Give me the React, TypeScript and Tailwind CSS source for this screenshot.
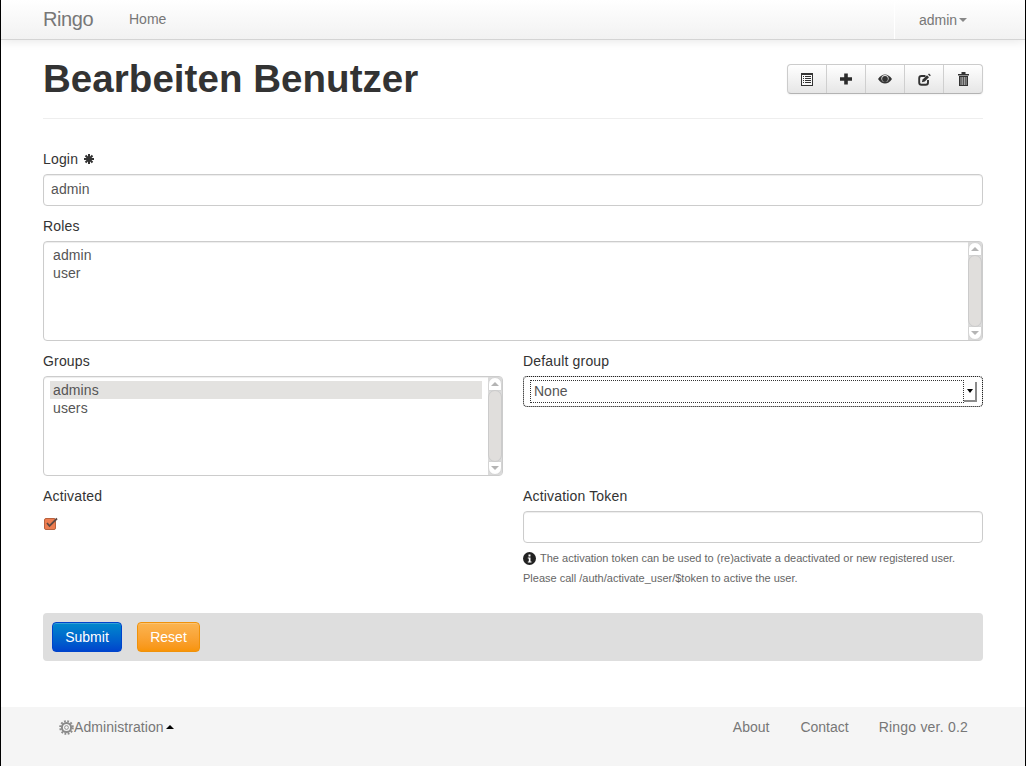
import React from "react";

const Scrollbar = () => (
  <div className="w-[14px] shrink-0 bg-[#dadada] flex flex-col">
    <div className="h-[14px] bg-white rounded-t-[7px] border border-[#d4d4d4] flex items-center justify-center shrink-0">
      <div className="w-0 h-0 border-x-[4px] border-x-transparent border-b-[4px] border-b-[#b4b4b4]" />
    </div>
    <div className="flex-1 bg-[#e0dedc] rounded-[7px] border border-[#cbcbcb] -my-[1px] z-10" />
    <div className="h-[14px] bg-white rounded-b-[7px] border border-[#d4d4d4] flex items-center justify-center shrink-0">
      <div className="w-0 h-0 border-x-[4px] border-x-transparent border-t-[4px] border-t-[#b4b4b4]" />
    </div>
  </div>
);

const ListBox = ({ items, selected }: { items: string[]; selected?: string }) => (
  <div className="h-[100px] border border-[#cccccc] rounded-[4px] flex shadow-[inset_0_1px_1px_rgba(0,0,0,0.075)] bg-white">
    <div className="flex-1 pl-[6px] pr-[6px] pt-[4px] text-[#555555]">
      {items.map((i) => (
        <div key={i} className={`h-[18px] leading-[18px] pl-[3px] tracking-[0.1px] ${i === selected ? "bg-[#e3e2e0]" : ""}`}>
          {i}
        </div>
      ))}
    </div>
    <Scrollbar />
  </div>
);

const ToolButton = ({ children, last }: { children: React.ReactNode; last?: boolean }) => (
  <div
    className={`h-full flex items-center justify-center ${last ? "flex-1" : "w-[39px] shrink-0 border-r border-[#cfcfcf]"}`}
  >
    {children}
  </div>
);

const Label = ({ children }: { children: React.ReactNode }) => (
  <div className="h-[20px] leading-[20px] mb-[5px] text-[#333333] tracking-[0.17px]">{children}</div>
);

export default function App() {
  return (
    <div
      className="min-h-[766px] h-[766px] bg-white border-x border-black flex flex-col text-[14px] text-[#333333] overflow-hidden"
      style={{ fontFamily: '"Liberation Sans", Arial, sans-serif' }}
    >
      {/* Navbar */}
      <nav className="h-[40px] shrink-0 bg-gradient-to-b from-white to-[#f2f2f2] border-b border-[#d4d4d4] shadow-[0_1px_10px_rgba(0,0,0,0.1)] flex pl-[42px] pr-[42px] items-stretch">
        <div className="text-[20px] text-[#777777] leading-[39px] w-[86px] tracking-[-0.4px]">Ringo</div>
        <div className="text-[#777777] leading-[39px]">Home</div>
        <div className="ml-auto w-[89px] border-l border-white pl-[24px] text-[#777777] leading-[38px] flex items-center">
          <span>admin</span>
          <span className="ml-[2px] mt-[1px] w-0 h-0 border-x-[4px] border-x-transparent border-t-[4px] border-t-[#888888]" />
        </div>
      </nav>

      <main className="px-[42px] flex-1">
        {/* Header */}
        <div className="h-[79px] border-b border-[#eeeeee] flex justify-between items-start">
          <h1 className="text-[38.5px] font-bold leading-[40px] text-[#333333] mt-[19px] tracking-[0.05px]">Bearbeiten Benutzer</h1>
          <div className="mt-[24px] w-[196px] h-[30px] flex rounded-[4px] border border-[#cccccc] border-b-[#b3b3b3] bg-gradient-to-b from-white to-[#e6e6e6] shadow-[inset_0_1px_0_rgba(255,255,255,0.2),0_1px_2px_rgba(0,0,0,0.05)]">
            <ToolButton>
              <svg width="12" height="13" viewBox="0 0 12 13">
                <rect x="0.500" y="1" width="11" height="11.500" fill="#f8f8f8" stroke="#333" />
                <path d="M0 1h12" stroke="#333" strokeWidth="2" />
                <path d="M2 3.500h1M2 5.500h1M2 7.500h1M2 9.500h1M4 3.500h6M4 5.500h6M4 7.500h6M4 9.500h6" stroke="#333" strokeWidth="1" />
              </svg>
            </ToolButton>
            <ToolButton>
              <svg width="12" height="12" viewBox="0 0 12 12">
                <path d="M4.200 0.500h3.600V4.200H12v3.600H7.800v3.700H4.200V7.800H0V4.200h4.200z" fill="#2b2b2b" />
              </svg>
            </ToolButton>
            <ToolButton>
              <svg width="14" height="10" viewBox="0 0 14 10">
                <path d="M0 5C2 2 4.500 0.500 7 0.500S12 2 14 5c-2 3-4.500 4.500-7 4.500S2 8 0 5z" fill="#333" />
                <circle cx="7" cy="4.500" r="3.600" fill="#e9e9e9" />
                <circle cx="7" cy="5" r="2.900" fill="#333" />
              </svg>
            </ToolButton>
            <ToolButton>
              <svg width="13" height="13" viewBox="0 0 13 13">
                <path d="M7.500 3H3.500A2.300 2.300 0 0 0 1.200 5.300v4.200a2.300 2.300 0 0 0 2.300 2.300h4.200a2.300 2.300 0 0 0 2.300-2.300V7" fill="none" stroke="#333" strokeWidth="1.900" />
                <path d="M4.600 6.400l-0.700 2.900 2.900-0.700L11 4.200 9 2.300z" fill="#333" />
                <path d="M10 1.400l1.900 1.900 0.900-1-1.800-1.800z" fill="#333" />
              </svg>
            </ToolButton>
            <ToolButton last>
              <svg width="11" height="14" viewBox="0 0 11 14">
                <path d="M0 2h11v1.500H0zM3.500 0h4v2h-4z" fill="#333" />
                <path d="M1 4h9v10H1z" fill="#333" />
                <path d="M3 5v8M4.700 5v8M6.400 5v8M8.100 5v8" stroke="#e6e6e6" strokeWidth="0.700" />
              </svg>
            </ToolButton>
          </div>
        </div>

        {/* Form */}
        <div className="mt-[30px]">
          <Label>
            <span className="flex items-center h-full">
              Login
              <svg className="ml-[6px]" width="10" height="10" viewBox="0 0 10 10">
                <path d="M5 0v10M0 5h10M1.500 1.500l7 7M8.500 1.500l-7 7" stroke="#333" strokeWidth="2" />
              </svg>
            </span>
          </Label>
          <div className="h-[32px] border border-[#cccccc] rounded-[4px] px-[7px] leading-[29px] text-[#555555] tracking-[0.1px] shadow-[inset_0_1px_1px_rgba(0,0,0,0.075)] mb-[10px]">
            admin
          </div>

          <Label>Roles</Label>
          <ListBox items={["admin", "user"]} />

          <div className="grid grid-cols-2 gap-x-[20px] mt-[10px]">
            <div>
              <Label>Groups</Label>
              <ListBox items={["admins", "users"]} selected="admins" />
            </div>
            <div>
              <Label>Default group</Label>
              <div className="h-[31px] rounded-[4px] border border-[#cccccc] outline-1 outline-dotted outline-[#222222] -outline-offset-[1px] flex items-center pl-[6px] pr-[5px]">
                <div className="flex-1 h-[23px] border border-dotted border-[#333333] leading-[21px] pl-[3px] text-[#555555]">
                  None
                </div>
                <div className="w-[13px] h-[20px] border-r-2 border-b-2 border-[#8a8a8a] flex items-center justify-center">
                  <div className="w-0 h-0 border-x-[3px] border-x-transparent border-t-[4px] border-t-black" />
                </div>
              </div>
            </div>
          </div>

          <div className="grid grid-cols-2 gap-x-[20px] mt-[10px]">
            <div>
              <Label>Activated</Label>
              <svg className="ml-[1px] mt-[11px]" width="14" height="14" viewBox="0 0 14 14">
                <rect x="0.500" y="1.500" width="11" height="11" rx="1.500" fill="#ee7d50" stroke="#b8623f" />
                <path d="M3 6l2.500 3L13 1.500" fill="none" stroke="#5f4a44" strokeWidth="1.800" />
              </svg>
            </div>
            <div>
              <Label>Activation Token</Label>
              <div className="h-[32px] border border-[#cccccc] rounded-[4px] shadow-[inset_0_1px_1px_rgba(0,0,0,0.075)]" />
              <div className="mt-[5px] text-[11px] leading-[20px] text-[#666666]">
                <div className="flex items-center">
                  <svg className="mr-[4px]" width="13" height="13" viewBox="0 0 13 13">
                    <circle cx="6.500" cy="6.500" r="6.500" fill="#222" />
                    <rect x="5.500" y="2.500" width="2" height="2" fill="#fff" />
                    <path d="M4.800 5.500h2.700v4h1v1H4.800v-1h1V6.500h-1z" fill="#fff" />
                  </svg>
                  <span>The activation token can be used to (re)activate a deactivated or new registered user.</span>
                </div>
                <div>Please call /auth/activate_user/$token to active the user.</div>
              </div>
            </div>
          </div>

          {/* Actions */}
          <div className="mt-[25px] h-[48px] bg-[#dedede] rounded-[4px] flex items-center pl-[9px] gap-[15px]">
            <div className="w-[70px] h-[30px] rounded-[4px] border border-[#0044cc] bg-gradient-to-b from-[#0088cc] to-[#0044cc] text-white flex items-center justify-center shadow-[inset_0_1px_0_rgba(255,255,255,0.2)]">
              Submit
            </div>
            <div className="w-[63px] h-[30px] rounded-[4px] border border-[#f0920a] bg-gradient-to-b from-[#fbb450] to-[#f89406] text-white flex items-center justify-center shadow-[inset_0_1px_0_rgba(255,255,255,0.2)]">
              Reset
            </div>
          </div>
        </div>
      </main>

      {/* Footer */}
      <footer className="h-[59px] shrink-0 bg-[#f5f5f5] flex items-start pl-[58px] pr-[57px] pt-[10px] text-[#777777] leading-[20px]">
        <svg className="mt-[3px]" width="15" height="15" viewBox="0 0 15 15">
          <circle cx="7.500" cy="7.500" r="4.600" fill="none" stroke="#8a8a8a" strokeWidth="2" />
          <circle cx="7.500" cy="7.500" r="6.300" fill="none" stroke="#8a8a8a" strokeWidth="2" strokeDasharray="1.800 1.500" />
          <circle cx="7.500" cy="7.500" r="1.900" fill="none" stroke="#8a8a8a" strokeWidth="0.900" />
        </svg>
        <span className="tracking-[0.07px]">Administration</span>
        <span className="ml-[2px] mt-[8px] w-0 h-0 border-x-[4px] border-x-transparent border-b-[4px] border-b-black" />
        <div className="ml-auto flex gap-[30px]">
          <span className="mr-[1px]">About</span>
          <span>Contact</span>
          <span className="tracking-[0.21px]">Ringo ver. 0.2</span>
        </div>
      </footer>
    </div>
  );
}
